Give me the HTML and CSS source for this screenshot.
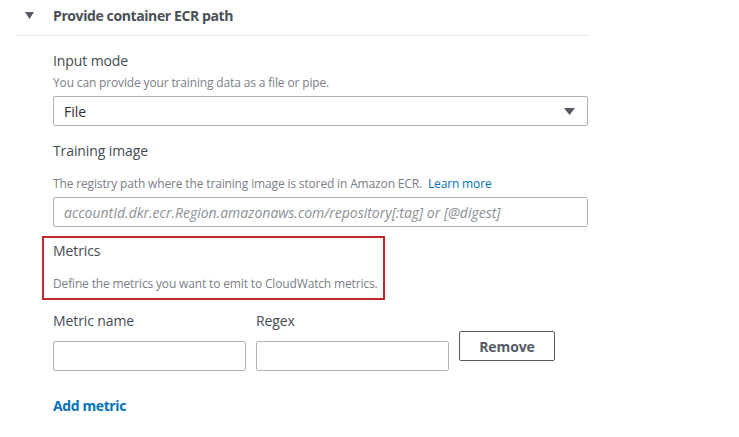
FILE: index.html
```html
<!DOCTYPE html>
<html lang="en">
<head>
<meta charset="utf-8">
<title>Provide container ECR path</title>
<link rel="stylesheet" href="styles.css">
</head>
<body>
<section class="panel">
  <div class="panel-header">
    <svg class="caret" width="9" height="7" viewBox="0 0 9 7"><polygon points="0,0 9,0 4.5,7" fill="#545b64"/></svg>
    <h2 class="panel-title">Provide container ECR path</h2>
  </div>
  <div class="panel-body">
    <div class="field">
      <div class="label">Input mode</div>
      <div class="hint">You can provide your training data as a file or pipe.</div>
      <div class="select">
        <span>File</span>
        <svg class="select-caret" width="11" height="7" viewBox="0 0 11 7"><polygon points="0,0 11,0 5.5,7" fill="#545b64"/></svg>
      </div>
    </div>
    <div class="field field-training">
      <div class="label">Training image</div>
      <div class="hint hint-spaced">The registry path where the training image is stored in Amazon ECR. <a class="link" href="#">Learn more</a></div>
      <div class="input placeholder">accountId.dkr.ecr.Region.amazonaws.com/repository[:tag] or [@digest]</div>
    </div>
    <div class="highlight">
      <div class="label">Metrics</div>
      <div class="hint hint-spaced">Define the metrics you want to emit to CloudWatch metrics.</div>
    </div>
    <div class="metric-row">
      <div class="col">
        <div class="label">Metric name</div>
        <div class="input input-small"></div>
      </div>
      <div class="col">
        <div class="label">Regex</div>
        <div class="input input-small"></div>
      </div>
      <button class="btn">Remove</button>
    </div>
    <a class="add-link" href="#">Add metric</a>
  </div>
</section>
</body>
</html>
```

FILE: styles.css
```css
* { box-sizing: border-box; }
html, body { margin: 0; background: #ffffff; }
body {
  font-family: "Open Sans", "Noto Sans", sans-serif;
  color: #444b53;
}
.panel {
  margin-left: 17px;
  width: 571px;
}
.panel-header {
  display: flex;
  align-items: center;
  height: 36px;
  padding: 0 0 4px 8px;
  border-bottom: 1px solid #e4e7e8;
}
.caret { flex: none; margin-right: 19px; margin-top: -1px; }
.panel-title {
  margin: 0;
  font-size: 14px;
  line-height: 20px;
  font-weight: 700;
  letter-spacing: -0.4px;
  color: #4a5058;
}
.panel-body {
  padding-left: 36px;
}
.label {
  font-size: 14px;
  line-height: 20px;
  letter-spacing: -0.1px;
  color: #444b53;
}
.hint {
  font-size: 12px;
  line-height: 16px;
  letter-spacing: -0.15px;
  white-space: nowrap;
  color: #7a8087;
  margin-top: 4px;
}
.hint-spaced { margin-top: 15px; }
.field { margin-top: 15px; }
.field-training { margin-top: 15px; }
.select {
  margin-top: 5px;
  height: 30px;
  border: 1px solid #aab7b8;
  border-radius: 2px;
  display: flex;
  align-items: center;
  justify-content: space-between;
  padding: 0 12px 0 10px;
  font-size: 14px;
  color: #2d3238;
}
.input {
  margin-top: 5px;
  height: 30px;
  border: 1px solid #aab7b8;
  border-radius: 2px;
  padding: 0 10px;
  display: flex;
  align-items: center;
  font-size: 14px;
}
.placeholder {
  font-style: italic;
  color: #8a9196;
}
.link { color: #0073bb; text-decoration: none; margin-left: 3px; }
.highlight {
  margin: 9px 0 0 -11px;
  width: 343px;
  height: 64px;
  border: 2px solid #c4262e;
  padding: 3px 0 0 9px;
}
.metric-row {
  margin-top: 11px;
  display: grid;
  grid-template-columns: 193px 193px 96px;
  column-gap: 10px;
  align-items: start;
}
.input-small { margin-top: 10px; }
.btn {
  margin-top: 20px;
  height: 30px;
  border: 1px solid #545b64;
  border-radius: 2px;
  background: #fff;
  font-family: inherit;
  font-size: 14px;
  font-weight: 700;
  letter-spacing: -0.1px;
  color: #545b64;
  padding: 0;
}
.add-link {
  display: block;
  margin-top: 25px;
  font-size: 14px;
  line-height: 20px;
  font-weight: 700;
  letter-spacing: -0.4px;
  color: #0073bb;
  text-decoration: none;
  width: max-content;
}
```
